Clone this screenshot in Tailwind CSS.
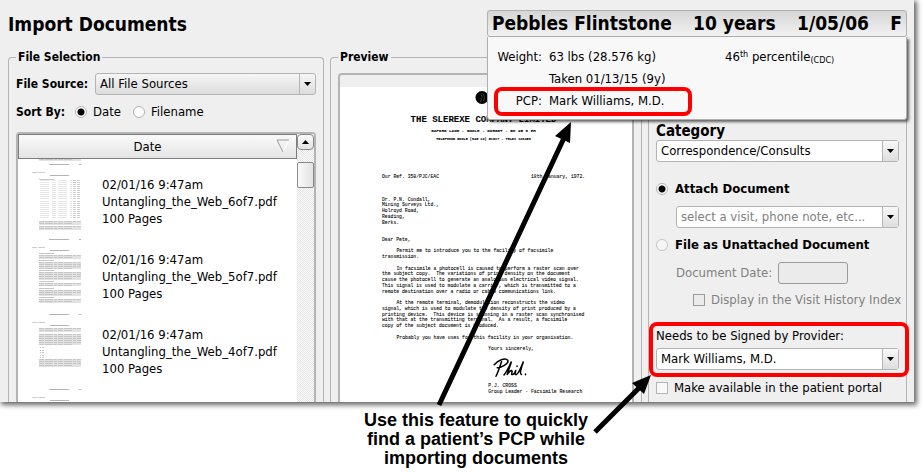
<!DOCTYPE html>
<html lang="en">
<head>
    <meta charset="UTF-8">
    <meta name="viewport" content="width=device-width, initial-scale=1.0">
    <title>Import Documents</title>
    <script src="https://cdn.jsdelivr.net/npm/@tailwindcss/browser@4"></script>
</head>
<body class="relative flex h-screen flex-col overflow-hidden bg-white font-['DejaVu_Sans_Condensed','Noto_Sans',sans-serif] text-[13px] text-black">
    <!-- Application window -->
    <main class="relative mr-[10px] flex min-h-0 flex-1 flex-col bg-[#efefef] shadow-[2px_2px_5px_1px_rgba(0,0,0,0.6)]">
        <h1 class="px-2 pt-[9px] pb-2 text-[19px] leading-[30px] font-bold">Import Documents</h1>

        <div class="grid min-h-0 flex-1 grid-cols-[316fr_312fr_259fr] gap-x-1.5 pr-[7px] pl-2">
            <!-- File selection -->
            <fieldset class="flex min-h-0 min-w-0 flex-col rounded-t-sm border border-b-0 border-[#b4b4b4] px-[7px]">
                <legend class="px-0.5 text-[12px] leading-5 font-bold">File Selection</legend>
                <div class="mt-1.5 flex items-center gap-[7px]">
                    <label for="file-source" class="shrink-0 text-[12px] font-bold">File Source:</label>
                    <div class="relative min-w-0 flex-1">
                        <select id="file-source" class="block h-[22px] w-full appearance-none rounded-[3px] border border-[#b4b4b4] bg-linear-to-b from-[#f6f6f6] to-[#dcdcdc] pl-1">
                            <option>All File Sources</option>
                        </select>
                        <span class="pointer-events-none absolute inset-y-px right-px flex w-4 items-center justify-center border-l border-[#b4b4b4]">
                            <svg class="h-1 w-[7px]" viewBox="0 0 7 4"><path d="M0 0h7L3.5 4z"/></svg>
                        </span>
                    </div>
                </div>
                <div class="mt-[7px] flex h-5 items-center">
                    <span class="mr-2.5 text-[12px] font-bold">Sort By:</span>
                    <label class="mr-3 flex items-center gap-1.5">
                        <input type="radio" name="sort" checked class="size-3 appearance-none rounded-full border border-[#b4b4b4] bg-white checked:bg-[radial-gradient(circle,#000_3px,#fff_4px)]">
                        Date
                    </label>
                    <label class="flex items-center gap-1.5">
                        <input type="radio" name="sort" class="size-3 appearance-none rounded-full border border-[#b4b4b4] bg-white checked:bg-[radial-gradient(circle,#000_3px,#fff_4px)]">
                        Filename
                    </label>
                </div>
                <div class="mt-2.5 flex min-h-0 flex-1 rounded-t-sm border-2 border-b-0 border-[#b4b4b4] bg-white">
                    <div class="flex min-h-0 min-w-0 flex-1 flex-col">
                        <button class="relative h-[25px] w-full shrink-0 border border-[#7d7d7d] bg-linear-to-b from-[#fafafa] to-[#e4e4e4] pr-5">
                            Date
                            <svg class="absolute top-1 right-1.5 h-3.5 w-3.5" viewBox="0 0 14 14" fill="none"><path d="M13 1L7 13" stroke="#fff"/><path d="M13 1H1l6 12" stroke="#9a9a9a"/></svg>
                        </button>
                        <ul id="files" class="min-h-0 flex-1 overflow-hidden"></ul>
                    </div>
                    <div class="flex w-[17px] flex-col bg-[repeating-conic-gradient(#e6e6e6_0_25%,#fafafa_0_50%)] bg-size-[2px_2px]">
                        <button class="flex h-4 w-full items-center justify-center rounded-sm border border-[#8a8a8a] bg-linear-to-b from-[#fafafa] to-[#e2e2e2]" aria-label="Scroll up">
                            <svg class="h-1 w-[7px]" viewBox="0 0 7 4"><path d="M0 4h7L3.5 0z"/></svg>
                        </button>
                        <div class="mt-3 h-[26px] w-full rounded-xs border border-[#8a8a8a] bg-linear-to-r from-[#fafafa] to-[#e2e2e2]"></div>
                    </div>
                </div>
            </fieldset>

            <!-- Preview -->
            <fieldset class="flex min-h-0 min-w-0 flex-col rounded-t-sm border border-b-0 border-[#b4b4b4] px-[7px]">
                <legend class="px-0.5 text-[12px] leading-5 font-bold">Preview</legend>
                <div class="mt-1.5 min-h-0 flex-1 overflow-hidden rounded-t-sm border-2 border-b-0 border-[#b4b4b4] pt-3">
                    <svg class="w-full bg-white font-['Liberation_Mono',monospace]" viewBox="0 0 1168 1400" font-size="19" stroke="#000" stroke-width="0.3">
                        <circle cx="568" cy="42" r="26"/>
                        <path d="M562 60l6-18-4-16M574 56l4-14-6-16" fill="none" stroke="#777" stroke-width="2"/>
                        <g text-anchor="middle" font-weight="bold">
                            <text x="574" y="140" font-size="36">THE SLEREXE COMPANY LIMITED</text>
                            <text x="574" y="178" font-size="17">SAPORS LANE - BOOLE - DORSET - BH 25 8 ER</text>
                            <text x="574" y="212" font-size="14">TELEPHONE BOOLE (945 13) 51617 - TELEX 123456</text>
                        </g>
                        <g id="letter"></g>
                        <path d="M617 1111c14-18 44-30 54-18 8 14-30 30-42 30M646 1099c-8 24-14 44-22 58M656 1152c14-18 26-46 30-54-6 20-14 40-18 54 8-14 18-22 20-16s-6 16 2 14 12-12 14-18c-4 12-6 20 2 18s20-34 28-52c-8 24-18 50-8 52M708 1116v2M742 1148v3" fill="none" stroke-width="6" stroke-linecap="round"/>
                    </svg>
                </div>
            </fieldset>

            <!-- Filing options -->
            <section class="mt-2.5 min-h-0 min-w-0 rounded-t-sm border border-b-0 border-[#b4b4b4] px-[7px] pt-16">
                <label for="category" class="block text-[15px] leading-[18px] font-bold">Category</label>
                <div class="relative">
                    <select id="category" class="block h-[22px] w-full appearance-none rounded-[3px] border border-[#b4b4b4] bg-white pl-1">
                        <option>Correspondence/Consults</option>
                    </select>
                    <span class="pointer-events-none absolute inset-y-px right-px flex w-4 items-center justify-center border-l border-[#b4b4b4] bg-linear-to-b from-[#f8f8f8] to-[#dedede]">
                        <svg class="h-1 w-[7px]" viewBox="0 0 7 4"><path d="M0 0h7L3.5 4z"/></svg>
                    </span>
                </div>

                <label class="mt-[17px] flex h-5 items-center gap-[7px] font-bold">
                    <input type="radio" name="filing" checked class="size-3 appearance-none rounded-full border border-[#b4b4b4] bg-white checked:bg-[radial-gradient(circle,#000_3px,#fff_4px)]">
                    Attach Document
                </label>
                <div class="relative mt-[7px] ml-5">
                    <select aria-label="Attach to" class="block h-[22px] w-full appearance-none rounded-[3px] border border-[#b4b4b4] bg-white pl-1 text-[#808080]">
                        <option>select a visit, phone note, etc...</option>
                    </select>
                    <span class="pointer-events-none absolute inset-y-px right-px flex w-4 items-center justify-center border-l border-[#b4b4b4] bg-linear-to-b from-[#f8f8f8] to-[#dedede]">
                        <svg class="h-1 w-[7px]" viewBox="0 0 7 4"><path d="M0 0h7L3.5 4z"/></svg>
                    </span>
                </div>
                <label class="mt-[7px] flex h-5 items-center gap-[7px] font-bold whitespace-nowrap">
                    <input type="radio" name="filing" class="size-3 appearance-none rounded-full border border-[#c4c4c4] bg-[#f6f6f6] checked:bg-[radial-gradient(circle,#000_3px,#fff_4px)]">
                    File as Unattached Document
                </label>
                <div class="mt-[7px] ml-5 flex h-[22px] items-center gap-1.5 text-[#808080]">
                    <label for="doc-date">Document Date:</label>
                    <input id="doc-date" type="text" disabled class="h-[22px] w-[70px] rounded-[3px] border border-[#9a9a9a] bg-[#ebebeb] px-1">
                </div>
                <label class="mt-1.5 ml-[37px] flex h-5 items-center gap-1.5 whitespace-nowrap text-[#808080]">
                    <input type="checkbox" disabled class="size-3 shrink-0 appearance-none border border-[#9a9a9a] bg-[#ebebeb]">
                    Display in the Visit History Index
                </label>

                <div class="relative mt-4">
                    <label for="signer" class="mb-0.5 block leading-5">Needs to be Signed by Provider:</label>
                    <div class="relative">
                        <select id="signer" class="block h-[22px] w-full appearance-none rounded-[3px] border border-[#b4b4b4] bg-white pl-1">
                            <option>Mark Williams, M.D.</option>
                        </select>
                        <span class="pointer-events-none absolute inset-y-px right-px flex w-4 items-center justify-center border-l border-[#b4b4b4] bg-linear-to-b from-[#f8f8f8] to-[#dedede]">
                            <svg class="h-1 w-[7px]" viewBox="0 0 7 4"><path d="M0 0h7L3.5 4z"/></svg>
                        </span>
                    </div>
                    <div class="pointer-events-none absolute -top-1 -right-[10px] -bottom-[7px] -left-[7px] rounded-lg border-4 border-[#f00]"></div>
                </div>
                <label class="mt-2 flex h-5 items-center gap-1.5 whitespace-nowrap">
                    <input type="checkbox" class="size-3 shrink-0 appearance-none border border-[#b4b4b4] bg-[#f8f8f8] checked:bg-black">
                    Make available in the patient portal
                </label>
            </section>
        </div>

        <!-- Patient banner with its open details -->
        <aside class="absolute top-2.5 right-[7px] w-[420px]">
            <h2 class="flex h-[27px] items-center justify-between rounded-[3px] border border-[#b0b0b0] bg-linear-to-b from-[#d6d6d6] to-[#f2f2f2] px-1 text-[19px] font-bold">
                <span>Pebbles Flintstone</span><span>10 years</span><span>1/05/06</span><span>F</span>
            </h2>
            <dl class="grid grid-cols-[50px_169px_1fr] gap-x-[7px] rounded-b-[3px] border border-t-0 border-[#b0b0b0] bg-[#f8f8f8] pt-[9px] pr-2 pb-[7px] pl-1 leading-[22px] shadow-[2px_2px_3px_rgba(0,0,0,0.6)]">
                <dt class="text-right">Weight:</dt>
                <dd>63 lbs (28.576 kg)</dd>
                <dd>46<sup class="text-[9px]">th</sup> percentile<sub class="text-[9px]">(CDC)</sub></dd>
                <dd class="col-span-2 col-start-2">Taken 01/13/15 (9y)</dd>
                <div class="relative col-span-3 grid grid-cols-subgrid">
                    <dt class="text-right">PCP:</dt>
                    <dd>Mark Williams, M.D.</dd>
                    <div class="pointer-events-none absolute -top-[3px] -bottom-1 left-0.5 w-[198px] rounded-lg border-4 border-[#f00]"></div>
                </div>
            </dl>
        </aside>
    </main>

    <p class="pt-[9px] pb-1 pl-7 text-center font-['Liberation_Sans',sans-serif] text-[18px] leading-[19px] font-bold">Use this feature to quickly<br>find a patient’s PCP while<br>importing documents</p>

    <!-- Callout arrows -->
    <svg class="pointer-events-none absolute top-0 left-0" width="924" height="472" viewBox="0 0 924 472">
        <path d="M439 405L564 138M595 432L639 388" stroke="#000" stroke-width="5"/>
        <path d="M571 122l-1 21-15-7zM651 375l-7 19-12-11z"/>
    </svg>

    <script>
        // Page thumbnails: [top, height] blocks of small print
        const pages = {
            6: { text: [[0, 2], [62, 4], [67, 4]], table: [[21, 19], [42, 18]], labels: [20] },
            5: { text: [[21, 4], [28, 7], [38, 8], [49, 3], [56, 6], [65, 4]], labels: [19, 26, 36, 47, 54, 63] },
            4: { text: [[19, 4], [25, 11], [50, 8]], bullets: [38, 41, 43, 46, 48] },
            3: { text: [] }
        };

        function thumbnail(page) {
            let out = '<path d="M17 5.5h20M47 5.5h2M18 16.5h19" stroke="#b4b4b4"/>';
            out += '<path d="M0 13.5h5M6 13.5h7" stroke="#ccc"/>';
            page.text.forEach(([y, h]) => {
                out += `<rect x="7" y="${y}" width="42" height="${h}" fill="#e2e2e2"/>`;
                for (let i = 0; i < h; i += 2) {
                    out += `<path d="M7 ${y + i + 0.5}h${i + 2 < h ? 42 : 34}" stroke="#c6c6c6" stroke-dasharray="5 1 8 1 3 1"/>`;
                }
            });
            (page.table || []).forEach(([y, h]) => {
                for (let i = 0; i < h; i += 2) {
                    out += `<path d="M8 ${y + i + 0.5}h32" stroke="#e6e6e6" stroke-dasharray="9 3 4 2"/>`;
                    out += `<path d="M41 ${y + i + 0.5}h7" stroke="#d0d0d0" stroke-dasharray="3 1"/>`;
                }
            });
            (page.labels || []).forEach((y) => {
                out += `<path d="M7 ${y + 0.5}h15" stroke="#c6c6c6"/>`;
            });
            (page.bullets || []).forEach((y) => {
                out += `<path d="M8 ${y + 0.5}h1M10 ${y + 0.5}h2" stroke="#c6c6c6"/>`;
            });
            return out;
        }

        function caption(n) {
            return `<div class="pt-[17px] leading-[17px]">02/01/16 9:47am<br>Untangling_the_Web_${n}of7.pdf<br>100 Pages</div>`;
        }

        // The last row only shows the top of its page
        document.getElementById('files').innerHTML = [6, 5, 4, 3].map((n) => `
            <li class="flex h-[75px] gap-[21px] pl-3.5">
                <svg class="h-[75px] w-[49px] shrink-0" viewBox="0 0 49 75" fill="none">${thumbnail(pages[n])}</svg>
                ${n > 3 ? caption(n) : ''}
            </li>`).join('');

        // Letter lines: [x, baseline, text]
        const letter = [
            [168, 362, 'Our Ref. 350/PJC/EAC'],
            [764, 362, '18th January, 1972.'],
            [168, 454, 'Dr. P.N. Cundall,'],
            [168, 477, 'Mining Surveys Ltd.,'],
            [168, 500, 'Holroyd Road,'],
            [168, 523, 'Reading,'],
            [168, 546, 'Berks.'],
            [168, 615, 'Dear Pete,'],
            [226, 661, 'Permit me to introduce you to the facility of facsimile'],
            [168, 684, 'transmission.'],
            [226, 730, 'In facsimile a photocell is caused to perform a raster scan over'],
            [168, 753, 'the subject copy.  The variations of print density on the document'],
            [168, 776, 'cause the photocell to generate an analogous electrical video signal.'],
            [168, 799, 'This signal is used to modulate a carrier, which is transmitted to a'],
            [168, 822, 'remote destination over a radio or cable communications link.'],
            [226, 868, 'At the remote terminal, demodulation reconstructs the video'],
            [168, 891, 'signal, which is used to modulate the density of print produced by a'],
            [168, 914, 'printing device.  This device is scanning in a raster scan synchronised'],
            [168, 937, 'with that at the transmitting terminal.  As a result, a facsimile'],
            [168, 960, 'copy of the subject document is produced.'],
            [226, 1006, 'Probably you have uses for this facility in your organisation.'],
            [593, 1052, 'Yours sincerely,'],
            [593, 1201, 'P.J. CROSS'],
            [593, 1224, 'Group Leader - Facsimile Research']
        ];
        document.getElementById('letter').innerHTML = letter
            .map(([x, y, line]) => `<text class="whitespace-pre" x="${x}" y="${y}">${line}</text>`)
            .join('');
    </script>
</body>
</html>
